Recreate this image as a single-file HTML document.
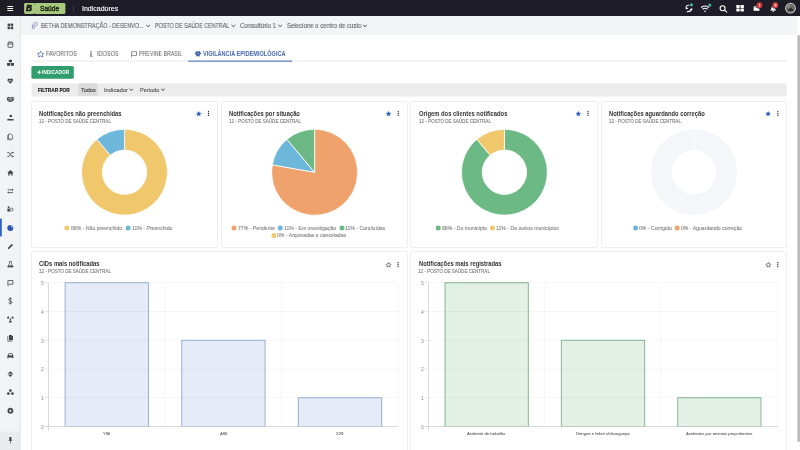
<!DOCTYPE html>
<html><head><meta charset="utf-8">
<style>
*{margin:0;padding:0;box-sizing:border-box}
html,body{width:800px;height:450px;overflow:hidden;background:#fff;font-family:"Liberation Sans",sans-serif}
.t{position:absolute;white-space:nowrap;line-height:1;will-change:transform}
#top{position:absolute;left:0;top:0;width:800px;height:16.3px;background:#1d1c27}
#side{position:absolute;left:0;top:16.3px;width:21px;height:434px;background:#f2f3f5;border-right:1px solid #e4e5e8}
#crumb{position:absolute;left:21px;top:16.3px;width:776px;height:18.9px;background:#f3f4f7}
.card{position:absolute;border:1px solid #efefef;border-radius:2px;background:#fff}
svg{position:absolute;left:0;top:0}
</style></head><body>
<div id="top"></div>
<div id="side"></div>
<div id="crumb"></div>

<div class="card" style="left:31px;top:101px;width:187px;height:147px"></div>
<div class="card" style="left:221px;top:101px;width:187px;height:147px"></div>
<div class="card" style="left:410px;top:101px;width:188px;height:147px"></div>
<div class="card" style="left:601px;top:101px;width:186px;height:147px"></div>
<div class="card" style="left:31px;top:251px;width:377px;height:210px"></div>
<div class="card" style="left:410px;top:251px;width:377px;height:210px"></div>

<svg width="800" height="450" viewBox="0 0 800 450">
  <!-- logo -->
  <path d="M25.5,2.9 H33.3 Q34.2,2.9 34.5,3.8 Q34.8,2.9 35.7,2.9 H64 Q65.4,2.9 65.4,4.3 V12.6 Q65.4,14 64,14 H35.7 Q34.8,14 34.5,13.1 Q34.2,14 33.3,14 H25.5 Q24.1,14 24.1,12.6 V4.3 Q24.1,2.9 25.5,2.9 Z" fill="#a9c87d"/>
  <!-- hamburger -->
  <g fill="#fff"><rect x="7.2" y="6" width="6" height="1.05" rx="0.4"/><rect x="7.2" y="8" width="6" height="1.05" rx="0.4"/><rect x="7.2" y="9.95" width="6" height="1.05" rx="0.4"/></g>
  <rect x="73.1" y="5.5" width="0.6" height="6" fill="#55545c"/>

  <!-- top right icons -->
  <g fill="none" stroke="#fff" stroke-width="1.1" stroke-linecap="round">
    <path d="M688.6,5.3 Q685.2,5.6 686.3,8.6"/>
    <path d="M687.3,11.6 Q690.8,11.8 691.8,9"/>
    <path d="M686.3,8.6 L687.6,8.2 M691.8,9 L690.6,9.5"/>
    <path d="M701.5,7.3 Q705,4.6 708.5,7.3"/>
    <path d="M702.8,9 Q705,7.4 707.2,9"/>
    <circle cx="722.6" cy="8.2" r="2.5"/>
    <path d="M724.6,10.2 L726.8,12.2"/>
  </g>
  <circle cx="705" cy="11.2" r="0.8" fill="#fff"/>
  <circle cx="691.3" cy="4.8" r="1.6" fill="#48b898"/>
  <circle cx="709.8" cy="5.1" r="1.6" fill="#48b898"/>
  <g fill="#fff">
    <rect x="736.3" y="4.9" width="3.4" height="3" rx="0.4"/><rect x="740.5" y="4.9" width="3.4" height="3" rx="0.4"/>
    <rect x="736.3" y="8.5" width="3.4" height="3" rx="0.4"/><rect x="740.5" y="8.5" width="3.4" height="3" rx="0.4"/>
    <path d="M753.6,7.6 H759.4 V10.8 H753.6 Z"/><path d="M753.2,7.6 L754.2,6.2 H759 L759.8,7.6 Z"/>
    <path d="M769.8,10.6 Q771.2,9.8 771.3,8.2 Q771.5,6 773.2,5.8 Q775,6 775.1,8.2 Q775.2,9.8 776.6,10.6 Z"/>
    <circle cx="773.2" cy="11.3" r="0.75"/>
  </g>
  <circle cx="759.4" cy="5.2" r="3.4" fill="#1d1c27"/><circle cx="759.4" cy="5.2" r="2.9" fill="#d93b3b"/>
  <circle cx="775.3" cy="5.2" r="3.4" fill="#1d1c27"/><circle cx="775.3" cy="5.2" r="2.9" fill="#d93b3b"/>
  <path d="M759.5,3.8 V6.6" stroke="#fff" stroke-width="0.7"/>
  <path d="M775.8,6.6 V3.7 L774.2,5.8 H776.3" stroke="#fff" stroke-width="0.6" fill="none"/>
  <circle cx="790.5" cy="8.2" r="5.4" fill="#cfcfcf"/>
  <circle cx="790.5" cy="8.2" r="4.5" fill="#6a6a6a"/>
  <path d="M787.6,11 Q788.6,8.3 789.6,9 Q790.6,7 791.8,8.2 Q792.8,9.5 793.4,11 Z" fill="#2e2e2e"/>
  <circle cx="788.8" cy="6.2" r="1.6" fill="#8a8a8a"/>

  <!-- breadcrumb icon -->
  <g fill="none" stroke="#8a8fb8" stroke-width="0.85">
    <circle cx="35.6" cy="24.1" r="1.75"/>
    <path d="M32.4,24.3 V27.6"/>
    <circle cx="33.5" cy="27.6" r="1.15"/>
  </g>
  <!-- tab icons -->
  <path d="M40.6,51.2 L41.7,53.2 L43.8,53.5 L42.3,55 L42.7,57 L40.6,56 L38.5,57 L38.9,55 L37.4,53.5 L39.5,53.2 Z" fill="none" stroke="#3d63ae" stroke-width="0.7" stroke-linejoin="round"/>
  <g fill="#8a8a8a">
    <circle cx="91" cy="51.6" r="0.8"/>
    <path d="M90,52.8 H91.8 L91.6,57 H90.3 Z"/>
    <rect x="92" y="55.6" width="0.7" height="1.4"/>
  </g>
  <path d="M131.5,57.2 V51.7 H136.5 V55.4 H131.5" fill="none" stroke="#6a6a6a" stroke-width="0.75" stroke-linejoin="round"/>
  <g fill="#3d63ae">
    <ellipse cx="198" cy="53.8" rx="2.3" ry="2.2"/>
    <circle cx="195.6" cy="53.4" r="0.8"/><circle cx="200.4" cy="53.4" r="0.8"/>
    <circle cx="196.6" cy="51.8" r="0.8"/><circle cx="199.4" cy="51.8" r="0.8"/>
    <circle cx="196.8" cy="55.9" r="0.7"/><circle cx="199.2" cy="55.9" r="0.7"/>
    <circle cx="197.3" cy="53.4" r="0.45" fill="#fff"/><circle cx="198.8" cy="53.8" r="0.45" fill="#fff"/>
  </g>

  <!-- tab line -->
  <rect x="31.5" y="60.7" width="755.2" height="0.7" fill="#e2e2e2"/>
  <rect x="188.2" y="60.6" width="103.8" height="1.1" fill="#5174b9"/>
  <!-- button -->
  <rect x="31.4" y="66.1" width="42.4" height="12.6" rx="1.5" fill="#2f9d6e"/>
  <path d="M39.25,70.3 V74.2 M37.3,72.25 H41.2" stroke="#fff" stroke-width="1"/>
  <!-- filter bar -->
  <rect x="31.5" y="83.4" width="755.2" height="13" rx="0.8" fill="#ececec"/>
  <rect x="78.5" y="83.4" width="19" height="12.3" fill="#dadada"/>

  <!-- chevrons -->
  <g fill="none" stroke="#444" stroke-width="0.95" stroke-linecap="round" stroke-linejoin="round">
    <path d="M146.6,25.2 L148.2,26.7 L149.8,25.2"/>
    <path d="M231.8,25.2 L233.4,26.7 L235,25.2"/>
    <path d="M278.6,25.2 L280.2,26.7 L281.8,25.2"/>
    <path d="M363.4,25.2 L365,26.7 L366.6,25.2"/>
    <path d="M129.6,89 L131.2,90.5 L132.8,89"/>
    <path d="M161.4,89 L163,90.5 L164.6,89"/>
  </g>

  <!-- card icons row1 -->
  <g fill="#2f5fc4">
    <path id="st" d="M198.75,110.9 L199.6,112.8 L201.5,113 L200.1,114.3 L200.5,116.2 L198.75,115.2 L197,116.2 L197.4,114.3 L196,113 L197.9,112.8 Z"/>
    <use href="#st" x="189.8"/><use href="#st" x="379.6"/><use href="#st" x="569.4"/>
  </g>
  <g fill="#333">
    <g id="kb"><rect x="207.9" y="110.9" width="1.1" height="1.3"/><rect x="207.9" y="112.85" width="1.1" height="1.3"/><rect x="207.9" y="114.8" width="1.1" height="1.3"/></g>
    <use href="#kb" x="189.8"/><use href="#kb" x="379.6"/><use href="#kb" x="569.4"/>
    <use href="#kb" x="189.6" y="151.1"/><use href="#kb" x="569.3" y="151.1"/>
  </g>
  <g fill="none" stroke="#333" stroke-width="0.6" stroke-linejoin="round">
    <path id="st2" d="M388.5,262.4 L389.3,264 L391,264.2 L389.8,265.4 L390.1,267.1 L388.5,266.2 L386.9,267.1 L387.2,265.4 L386,264.2 L387.7,264 Z"/>
    <use href="#st2" x="379.9"/>
  </g>

  <!-- scrollbar -->
  <rect x="797.3" y="35" width="2.7" height="407" rx="1" fill="#bdbdbd"/>

  <!-- sidebar icons -->
  <g fill="#454545" id="sideicons">
    <!-- 1 grid -->
    <rect x="7.6" y="23.6" width="2.5" height="2.5"/><rect x="10.7" y="23.6" width="2.5" height="2.5"/>
    <rect x="7.6" y="26.7" width="2.5" height="2.5"/><rect x="10.7" y="26.7" width="2.5" height="2.5"/>
  </g>
  <g fill="none" stroke="#454545" stroke-width="0.8">
    <!-- 2 calendar -->
    <rect x="8" y="42.3" width="4.8" height="5" rx="0.5"/>
    <path d="M8,44 H12.8 M9.2,41.5 V42.8 M11.6,41.5 V42.8"/>
    <!-- 15 comment -->
    <path d="M7.9,280.5 H12.9 V284.2 H9.5 L7.9,285.5 Z" stroke-linejoin="round"/>
  </g>
  <g fill="#454545">
    <!-- 4 heart -->
    <path d="M10.3,83.8 L7.8,81.3 Q6.8,80 7.9,78.9 Q9.2,78 10.3,79.3 Q11.4,78 12.7,78.9 Q13.8,80 12.8,81.3 Z"/>
    <path d="M7.6,80.9 H9.2 L9.9,80 L10.7,81.9 L11.3,80.9 H13" fill="none" stroke="#f2f3f5" stroke-width="0.5"/>
    <!-- 3 cubes -->
    <path d="M8.8,59.8 H12 V62 Q10.4,62.8 8.8,62 Z"/>
    <path d="M7,63 H10.2 V65.6 Q8.6,66.4 7,65.6 Z"/>
    <path d="M10.8,63 H14 V65.6 Q12.4,66.4 10.8,65.6 Z"/>
    <!-- 5 handshake -->
    <path d="M6.9,97.6 L8.8,96.8 L10.4,97.6 L12,96.8 L13.9,97.6 V100.2 L11.6,102 H9.2 L6.9,100.2 Z" fill="#5a5a5a"/><path d="M8.2,98.6 H12.6 M8.8,100 H12" stroke="#f2f3f5" stroke-width="0.45"/>
    <!-- 6 hand-holding user -->
    <circle cx="10.8" cy="116" r="1.3"/>
    <path d="M7.2,119.2 Q9,118.3 10.5,119 H13.6 V120.4 H7.2 Z"/>
    <!-- 7 copy -->
    <path d="M8.5,134 H11 L12.6,135.6 V139 H8.5 Z" fill="none" stroke="#454545" stroke-width="0.7"/>
    <path d="M7.6,135 V139.8 H11.4" fill="none" stroke="#454545" stroke-width="0.6"/>
    <!-- 8 shuffle -->
    <path d="M7.3,152.6 H9 L11.6,156.4 H13 M7.3,156.4 H9 L11.6,152.6 H13" fill="none" stroke="#454545" stroke-width="0.8"/>
    <path d="M12.6,151.4 L14,152.6 L12.6,153.8 Z M12.6,155.2 L14,156.4 L12.6,157.6 Z"/>
    <!-- 9 home -->
    <path d="M7.2,172.8 L10.4,170 L13.6,172.8 H12.6 V175.6 H11.2 V173.8 H9.6 V175.6 H8.2 V172.8 Z"/>
    <!-- 10 exchange -->
    <path d="M7.6,189.8 H12.2 M8.6,192.6 H13.2" fill="none" stroke="#454545" stroke-width="0.8"/>
    <path d="M12,188.6 L13.6,189.8 L12,191 Z M8.8,191.4 L7.2,192.6 L8.8,193.8 Z"/>
    <!-- 11 people -->
    <circle cx="8.6" cy="207.3" r="1"/><path d="M7.4,208.6 H9.8 V211.6 H7.4 Z"/>
    <circle cx="11.6" cy="209.6" r="1.5" fill="none" stroke="#454545" stroke-width="0.7"/>
    <!-- 13 pen -->
    <path d="M7.8,249.2 L8.2,247.6 L12,243.8 L13.1,244.9 L9.3,248.7 Z"/>
    <!-- 14 flask -->
    <path d="M9.4,261.5 H11.4 V263.8 L13.2,267 H7.6 L9.4,263.8 Z" fill="none" stroke="#454545" stroke-width="0.7"/>
    <path d="M8.4,265.4 H12.4 L13.2,267 H7.6 Z"/>
    <!-- 16 dollar -->
    <path d="M12,299.2 Q11.4,298.4 10.3,298.4 Q8.7,298.4 8.7,299.7 Q8.7,300.8 10.3,301 Q12,301.2 12,302.3 Q12,303.5 10.3,303.5 Q9.1,303.5 8.5,302.7 M10.3,297.4 V304.5" fill="none" stroke="#454545" stroke-width="0.8"/>
    <!-- 17 radiation-ish -->
    <circle cx="10.4" cy="319.2" r="0.8"/>
    <path d="M9.6,318.2 L8.2,316 Q7,317.2 7,318.6 H9.2 Z M11.2,318.2 L12.6,316 Q13.8,317.2 13.8,318.6 H11.6 Z M9.9,320.2 H10.9 L12,322.2 Q10.4,322.9 8.8,322.2 Z"/>
    <!-- 18 files -->
    <path d="M9,335 H11.4 L13,336.6 V340.2 H9 Z"/>
    <path d="M7.8,336 V341.2 H11.8" fill="none" stroke="#454545" stroke-width="0.7"/>
    <!-- 19 car -->
    <path d="M7.4,356 L8.4,353.8 Q8.7,353.2 9.4,353.2 H11.4 Q12.1,353.2 12.4,353.8 L13.4,356 V358.2 H12.4 V357.6 H8.4 V358.2 H7.4 Z"/>
    <rect x="8.8" y="354" width="3.2" height="1.3" fill="#f2f3f5"/>
    <!-- 20 satellite/virus -->
    <path d="M10.4,371.2 L13.4,374.1 L10.4,377 L7.4,374.1 Z"/>
    <rect x="6.8" y="373.7" width="7.2" height="0.8" fill="#f2f3f5"/>
    <!-- 21 biohazard -->
    <circle cx="10.4" cy="390.6" r="1.4"/><circle cx="8.4" cy="393.6" r="1.4"/><circle cx="12.4" cy="393.6" r="1.4"/>
    <circle cx="10.4" cy="392.6" r="0.7" fill="#f2f3f5"/>
    <!-- 22 cog -->
    <path d="M10.4,407.6 L11.2,408.3 L12.3,408.1 L12.6,409.2 L13.5,409.8 L13,410.8 L13.5,411.8 L12.6,412.4 L12.3,413.4 L11.2,413.2 L10.4,414 L9.6,413.2 L8.5,413.4 L8.2,412.4 L7.3,411.8 L7.8,410.8 L7.3,409.8 L8.2,409.2 L8.5,408.1 L9.6,408.3 Z"/>
    <circle cx="10.4" cy="410.8" r="1.1" fill="#f2f3f5"/>
  </g>
  <!-- active sidebar item -->
  
  <rect x="0" y="218.6" width="1.8" height="17.8" fill="#2f62c6"/>
  <circle cx="10.3" cy="227.9" r="3" fill="#2b52b3"/>
  <path d="M10.9,227.3 V224.3 A3,3 0 0 1 13.9,227.3 Z" fill="#f2f3f5"/><path d="M11.4,226.8 V225.2 A1.8,1.8 0 0 1 13,226.8 Z" fill="#2b52b3"/>
  <!-- pin area -->
  <rect x="0" y="431.3" width="20.5" height="19" fill="#eaebee"/>
  <path d="M9.4,437 H11.4 V439.6 L12.4,440.8 H8.4 L9.4,439.6 Z M10.1,440.8 H10.7 V443.6 H10.1 Z" fill="#3a3a3a"/>

<path d="M124.50,129.30 A42.9,42.9 0 1 1 96.92,139.34 L110.23,155.19 A22.2,22.2 0 1 0 124.50,150.00 Z" fill="#f1c76b" stroke="#fff" stroke-width="0.8" stroke-linejoin="round"/>
<path d="M96.92,139.34 A42.9,42.9 0 0 1 124.50,129.30 L124.50,150.00 A22.2,22.2 0 0 0 110.23,155.19 Z" fill="#6cb7da" stroke="#fff" stroke-width="0.8" stroke-linejoin="round"/>
<path d="M314.6,172.3 L314.60,129.30 A43,43 0 1 1 272.25,164.83 Z" fill="#f0a26c" stroke="#fff" stroke-width="0.8" stroke-linejoin="round"/>
<path d="M314.6,172.3 L272.25,164.83 A43,43 0 0 1 286.96,139.36 Z" fill="#6cb7da" stroke="#fff" stroke-width="0.8" stroke-linejoin="round"/>
<path d="M314.6,172.3 L286.96,139.36 A43,43 0 0 1 314.60,129.30 Z" fill="#6cb986" stroke="#fff" stroke-width="0.8" stroke-linejoin="round"/>
<path d="M504.40,129.30 A42.9,42.9 0 1 1 476.82,139.34 L490.13,155.19 A22.2,22.2 0 1 0 504.40,150.00 Z" fill="#6cb986" stroke="#fff" stroke-width="0.8" stroke-linejoin="round"/>
<path d="M476.82,139.34 A42.9,42.9 0 0 1 504.40,129.30 L504.40,150.00 A22.2,22.2 0 0 0 490.13,155.19 Z" fill="#f1c76b" stroke="#fff" stroke-width="0.8" stroke-linejoin="round"/>
<circle cx="694" cy="172.2" r="32.55" fill="none" stroke="#f5f6fa" stroke-width="20.7"/>
<rect x="693.7" y="129" width="0.6" height="21.5" fill="#fff"/>
<circle cx="66.8" cy="227.9" r="2.5" fill="#f1c76b"/>
<circle cx="128.1" cy="227.9" r="2.5" fill="#6cb7da"/>
<circle cx="234" cy="227.9" r="2.5" fill="#f0a26c"/>
<circle cx="280.2" cy="227.9" r="2.5" fill="#6cb7da"/>
<circle cx="342" cy="227.9" r="2.5" fill="#6cb986"/>
<circle cx="492.5" cy="227.9" r="2.5" fill="#f1c76b"/>
<circle cx="438.2" cy="227.9" r="2.5" fill="#6cb986"/>
<circle cx="635.6" cy="227.9" r="2.5" fill="#6cb7da"/>
<circle cx="677.2" cy="227.9" r="2.5" fill="#f0a26c"/>
<circle cx="273.9" cy="235.5" r="2.5" fill="#f1c76b"/>
<rect x="65.15" y="282.75" width="83.30" height="143.75" fill="#e5ecf8" stroke="#97b1d3" stroke-width="1"/>
<rect x="181.75" y="340.25" width="83.30" height="86.25" fill="#e5ecf8" stroke="#97b1d3" stroke-width="1"/>
<rect x="298.35" y="397.75" width="83.30" height="28.75" fill="#e5ecf8" stroke="#97b1d3" stroke-width="1"/>
<rect x="48.5" y="397.45" width="349.80" height="0.6" fill="#000" fill-opacity="0.06"/>
<rect x="44.5" y="397.45" width="4" height="0.6" fill="#d6d6d6"/>
<rect x="48.5" y="368.70" width="349.80" height="0.6" fill="#000" fill-opacity="0.06"/>
<rect x="44.5" y="368.70" width="4" height="0.6" fill="#d6d6d6"/>
<rect x="48.5" y="339.95" width="349.80" height="0.6" fill="#000" fill-opacity="0.06"/>
<rect x="44.5" y="339.95" width="4" height="0.6" fill="#d6d6d6"/>
<rect x="48.5" y="311.20" width="349.80" height="0.6" fill="#000" fill-opacity="0.06"/>
<rect x="44.5" y="311.20" width="4" height="0.6" fill="#d6d6d6"/>
<rect x="48.5" y="282.45" width="349.80" height="0.6" fill="#000" fill-opacity="0.06"/>
<rect x="44.5" y="282.45" width="4" height="0.6" fill="#d6d6d6"/>
<rect x="164.80" y="282.75" width="0.6" height="143.75" fill="#000" fill-opacity="0.06"/>
<rect x="281.40" y="282.75" width="0.6" height="143.75" fill="#000" fill-opacity="0.06"/>
<rect x="398.00" y="282.75" width="0.6" height="143.75" fill="#000" fill-opacity="0.06"/>
<rect x="48.1" y="282.75" width="0.8" height="147.75" fill="#d0d0d0"/>
<rect x="44.5" y="426.1" width="353.80" height="0.8" fill="#d0d0d0"/>
<rect x="445.02" y="282.75" width="83.30" height="143.75" fill="#e3f0e6" stroke="#84b898" stroke-width="1"/>
<rect x="561.35" y="340.25" width="83.30" height="86.25" fill="#e3f0e6" stroke="#84b898" stroke-width="1"/>
<rect x="677.68" y="397.75" width="83.30" height="28.75" fill="#e3f0e6" stroke="#84b898" stroke-width="1"/>
<rect x="428.5" y="397.45" width="349.00" height="0.6" fill="#000" fill-opacity="0.06"/>
<rect x="424.5" y="397.45" width="4" height="0.6" fill="#d6d6d6"/>
<rect x="428.5" y="368.70" width="349.00" height="0.6" fill="#000" fill-opacity="0.06"/>
<rect x="424.5" y="368.70" width="4" height="0.6" fill="#d6d6d6"/>
<rect x="428.5" y="339.95" width="349.00" height="0.6" fill="#000" fill-opacity="0.06"/>
<rect x="424.5" y="339.95" width="4" height="0.6" fill="#d6d6d6"/>
<rect x="428.5" y="311.20" width="349.00" height="0.6" fill="#000" fill-opacity="0.06"/>
<rect x="424.5" y="311.20" width="4" height="0.6" fill="#d6d6d6"/>
<rect x="428.5" y="282.45" width="349.00" height="0.6" fill="#000" fill-opacity="0.06"/>
<rect x="424.5" y="282.45" width="4" height="0.6" fill="#d6d6d6"/>
<rect x="544.53" y="282.75" width="0.6" height="143.75" fill="#000" fill-opacity="0.06"/>
<rect x="660.87" y="282.75" width="0.6" height="143.75" fill="#000" fill-opacity="0.06"/>
<rect x="777.20" y="282.75" width="0.6" height="143.75" fill="#000" fill-opacity="0.06"/>
<rect x="428.1" y="282.75" width="0.8" height="147.75" fill="#d0d0d0"/>
<rect x="424.5" y="426.1" width="353.00" height="0.8" fill="#d0d0d0"/>
</svg>

<div class="t" style="left:40.40px;top:6px;font-size:6.64px;font-weight:400;color:#18200f;-webkit-text-stroke:0.35px #18200f">Saúde</div>
<div class="t" style="left:25.60px;top:4px;font-size:8.4px;font-weight:700;color:#111;font-style:italic;-webkit-text-stroke:0.45px #111">B</div>
<div class="t" style="left:81.60px;top:5px;font-size:7.021px;font-weight:400;color:#ffffff;-webkit-text-stroke:0.12px #ffffff;">Indicadores</div>
<div class="t" style="left:41.00px;top:23px;font-size:6.4px;font-weight:400;color:#555555;transform:scale(0.8578032559808413,1);transform-origin:0 5px;-webkit-text-stroke:0.05px #555">BETHA DEMONSTRAÇÃO - DESENVO...</div>
<div class="t" style="left:155.20px;top:23px;font-size:6.4px;font-weight:400;color:#555555;transform:scale(0.8412958670209759,1);transform-origin:0 5px;-webkit-text-stroke:0.05px #555">POSTO DE SAÚDE CENTRAL</div>
<div class="t" style="left:239.80px;top:23px;font-size:6.4px;font-weight:400;color:#555555;transform:scale(0.9599575709360908,1);transform-origin:0 5px;-webkit-text-stroke:0.05px #555">Consultório 1</div>
<div class="t" style="left:286.80px;top:23px;font-size:6.4px;font-weight:400;color:#555555;transform:scale(0.9432170665316199,1);transform-origin:0 5px;-webkit-text-stroke:0.05px #555">Selecione o centro de custo</div>
<div class="t" style="left:46.00px;top:51px;font-size:6.3px;font-weight:400;color:#686868;transform:scale(0.8710382427014873,1);transform-origin:0 5px;-webkit-text-stroke:0.05px #686868">FAVORITOS</div>
<div class="t" style="left:96.90px;top:51px;font-size:6.3px;font-weight:400;color:#686868;transform:scale(0.8814516406707293,1);transform-origin:0 5px;-webkit-text-stroke:0.05px #686868">IDOSOS</div>
<div class="t" style="left:139.00px;top:51px;font-size:6.3px;font-weight:400;color:#686868;transform:scale(0.8346442494729952,1);transform-origin:0 5px;-webkit-text-stroke:0.05px #686868">PREVINE BRASIL</div>
<div class="t" style="left:203.10px;top:52px;font-size:5.596px;font-weight:700;color:#4669b2;-webkit-text-stroke:0.0px #4669b2;transform:scale(1,1.2);transform-origin:0 4px;">VIGILÂNCIA EPIDEMIOLÓGICA</div>
<div class="t" style="left:42.25px;top:71px;font-size:4.827px;font-weight:700;color:#ffffff;-webkit-text-stroke:0.0px #ffffff;">INDICADOR</div>
<div class="t" style="left:37.50px;top:89px;font-size:4.799px;font-weight:700;color:#222222;-webkit-text-stroke:0.15px #222">FILTRAR POR</div>
<div class="t" style="left:80.50px;top:88px;font-size:5.509px;font-weight:400;color:#444444;-webkit-text-stroke:0.12px #444444;">Todos</div>
<div class="t" style="left:104.00px;top:88px;font-size:5.834px;font-weight:400;color:#555555;-webkit-text-stroke:0.12px #555555;">Indicador</div>
<div class="t" style="left:140.00px;top:88px;font-size:5.539px;font-weight:400;color:#555555;-webkit-text-stroke:0.12px #555555;">Período</div>
<div class="t" style="left:39.25px;top:112px;font-size:5.839px;font-weight:700;color:#333333;-webkit-text-stroke:0.0px #333333;transform:scale(1,1.25);transform-origin:0 4px;">Notificações não preenchidas</div>
<div class="t" style="left:38.90px;top:120px;font-size:4.552px;font-weight:400;color:#808080;-webkit-text-stroke:0.12px #808080;">12 - POSTO DE SAÚDE CENTRAL</div>
<div class="t" style="left:229.05px;top:112px;font-size:5.839px;font-weight:700;color:#333333;-webkit-text-stroke:0.0px #333333;transform:scale(1,1.25);transform-origin:0 4px;">Notificações por situação</div>
<div class="t" style="left:228.90px;top:120px;font-size:4.552px;font-weight:400;color:#808080;-webkit-text-stroke:0.12px #808080;">12 - POSTO DE SAÚDE CENTRAL</div>
<div class="t" style="left:418.85px;top:112px;font-size:5.839px;font-weight:700;color:#333333;-webkit-text-stroke:0.0px #333333;transform:scale(1,1.25);transform-origin:0 4px;">Origem dos clientes notificados</div>
<div class="t" style="left:418.70px;top:120px;font-size:4.552px;font-weight:400;color:#808080;-webkit-text-stroke:0.12px #808080;">12 - POSTO DE SAÚDE CENTRAL</div>
<div class="t" style="left:608.65px;top:112px;font-size:5.839px;font-weight:700;color:#333333;-webkit-text-stroke:0.0px #333333;transform:scale(1,1.25);transform-origin:0 4px;">Notificações aguardando correção</div>
<div class="t" style="left:608.50px;top:120px;font-size:4.552px;font-weight:400;color:#808080;-webkit-text-stroke:0.12px #808080;">12 - POSTO DE SAÚDE CENTRAL</div>
<div class="t" style="left:39.40px;top:262px;font-size:5.839px;font-weight:700;color:#333333;-webkit-text-stroke:0.0px #333333;transform:scale(1,1.25);transform-origin:0 4px;">CIDs mais notificadas</div>
<div class="t" style="left:38.90px;top:270px;font-size:4.552px;font-weight:400;color:#808080;-webkit-text-stroke:0.12px #808080;">12 - POSTO DE SAÚDE CENTRAL</div>
<div class="t" style="left:419.00px;top:262px;font-size:5.839px;font-weight:700;color:#333333;-webkit-text-stroke:0.0px #333333;transform:scale(1,1.25);transform-origin:0 4px;">Notificações mais registradas</div>
<div class="t" style="left:418.40px;top:270px;font-size:4.552px;font-weight:400;color:#808080;-webkit-text-stroke:0.12px #808080;">12 - POSTO DE SAÚDE CENTRAL</div>
<div class="t" style="left:70.50px;top:226px;font-size:5.155px;font-weight:400;color:#888888;-webkit-text-stroke:0.12px #888888;">88% - Não preenchido</div>
<div class="t" style="left:131.70px;top:226px;font-size:5.155px;font-weight:400;color:#888888;-webkit-text-stroke:0.12px #888888;">11% - Preenchido</div>
<div class="t" style="left:237.80px;top:226px;font-size:5.155px;font-weight:400;color:#888888;-webkit-text-stroke:0.12px #888888;">77% - Pendente</div>
<div class="t" style="left:284.10px;top:226px;font-size:5.155px;font-weight:400;color:#888888;-webkit-text-stroke:0.12px #888888;">11% - Em investigação</div>
<div class="t" style="left:345.20px;top:226px;font-size:5.155px;font-weight:400;color:#888888;-webkit-text-stroke:0.12px #888888;">11% - Concluídas</div>
<div class="t" style="left:277.10px;top:233px;font-size:5.155px;font-weight:400;color:#888888;-webkit-text-stroke:0.12px #888888;">0% - Arquivadas e canceladas</div>
<div class="t" style="left:441.60px;top:226px;font-size:5.155px;font-weight:400;color:#888888;-webkit-text-stroke:0.12px #888888;">88% - Do município</div>
<div class="t" style="left:496.00px;top:226px;font-size:5.155px;font-weight:400;color:#888888;-webkit-text-stroke:0.12px #888888;">11% - De outros municípios</div>
<div class="t" style="left:638.80px;top:226px;font-size:5.155px;font-weight:400;color:#888888;-webkit-text-stroke:0.12px #888888;">0% - Corrigido</div>
<div class="t" style="left:680.60px;top:226px;font-size:5.155px;font-weight:400;color:#888888;-webkit-text-stroke:0.12px #888888;">0% - Aguardando correção</div>
<div class="t" style="left:40.82px;top:425px;font-size:5.0px;font-weight:400;color:#8a8a8a;-webkit-text-stroke:0">0</div>
<div class="t" style="left:40.82px;top:396px;font-size:5.0px;font-weight:400;color:#8a8a8a;-webkit-text-stroke:0">1</div>
<div class="t" style="left:40.82px;top:367px;font-size:5.0px;font-weight:400;color:#8a8a8a;-webkit-text-stroke:0">2</div>
<div class="t" style="left:40.82px;top:339px;font-size:5.0px;font-weight:400;color:#8a8a8a;-webkit-text-stroke:0">3</div>
<div class="t" style="left:40.82px;top:310px;font-size:5.0px;font-weight:400;color:#8a8a8a;-webkit-text-stroke:0">4</div>
<div class="t" style="left:40.82px;top:281px;font-size:5.0px;font-weight:400;color:#8a8a8a;-webkit-text-stroke:0">5</div>
<div class="t" style="left:420.82px;top:425px;font-size:5.0px;font-weight:400;color:#8a8a8a;-webkit-text-stroke:0">0</div>
<div class="t" style="left:420.82px;top:396px;font-size:5.0px;font-weight:400;color:#8a8a8a;-webkit-text-stroke:0">1</div>
<div class="t" style="left:420.82px;top:367px;font-size:5.0px;font-weight:400;color:#8a8a8a;-webkit-text-stroke:0">2</div>
<div class="t" style="left:420.82px;top:339px;font-size:5.0px;font-weight:400;color:#8a8a8a;-webkit-text-stroke:0">3</div>
<div class="t" style="left:420.82px;top:310px;font-size:5.0px;font-weight:400;color:#8a8a8a;-webkit-text-stroke:0">4</div>
<div class="t" style="left:420.82px;top:281px;font-size:5.0px;font-weight:400;color:#8a8a8a;-webkit-text-stroke:0">5</div>
<div class="t" style="left:103.26px;top:432px;font-size:4.208px;font-weight:400;color:#6a6a6a;-webkit-text-stroke:0.1px #6a6a6a">Y96</div>
<div class="t" style="left:219.66px;top:432px;font-size:4.208px;font-weight:400;color:#6a6a6a;-webkit-text-stroke:0.1px #6a6a6a">A90</div>
<div class="t" style="left:336.26px;top:432px;font-size:4.208px;font-weight:400;color:#6a6a6a;-webkit-text-stroke:0.1px #6a6a6a">X29</div>
<div class="t" style="left:467.00px;top:432px;font-size:4.208px;font-weight:400;color:#6a6a6a;-webkit-text-stroke:0.1px #6a6a6a">Acidente de trabalho</div>
<div class="t" style="left:576.10px;top:432px;font-size:4.208px;font-weight:400;color:#6a6a6a;-webkit-text-stroke:0.1px #6a6a6a">Dengue e febre chikungunya</div>
<div class="t" style="left:685.97px;top:432px;font-size:4.208px;font-weight:400;color:#6a6a6a;-webkit-text-stroke:0.1px #6a6a6a">Acidentes por animais peçonhentos</div>
</body></html>
